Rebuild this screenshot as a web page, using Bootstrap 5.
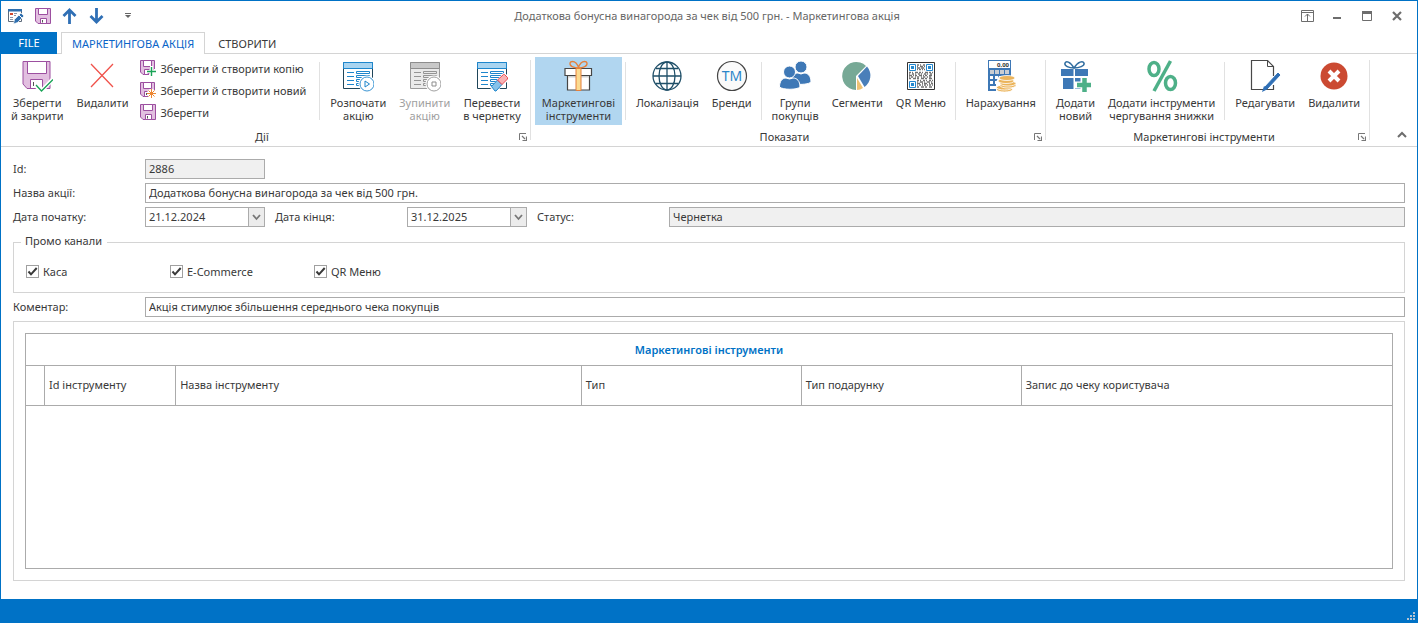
<!DOCTYPE html>
<html lang="uk">
<head>
<meta charset="utf-8">
<meta name="viewport" content="width=device-width, initial-scale=1">
<title>Маркетингова акція</title>
<link href="https://cdn.jsdelivr.net/npm/bootstrap@5.3.0/dist/css/bootstrap.min.css" rel="stylesheet">
<style>
:root{--accent:#0072c6;--line:#d4d4d4;--edge:#ababab;--ink:#393939}
body{font-family:"Noto Sans","Open Sans",sans-serif;font-size:11px;line-height:13px;color:var(--ink);background:#fff}
svg{display:block;flex:none}
button{font:inherit;color:inherit}
.app-window{min-height:100vh;border:1px solid var(--accent);border-bottom:0}
.title-bar{height:31px;padding:0 5px 0 1px}
.title-side{flex:1 1 0}
.title-bar h1{font-size:11px;line-height:30px;color:#666;font-weight:400}
.bar-btn{width:27px;height:30px;border:0;padding:0;background:none;display:flex;align-items:center;justify-content:center}
.win-btn{width:30px}
.tab-strip{height:22px;border-bottom:1px solid var(--line)}
.tab-strip a{text-decoration:none;color:var(--ink);padding:4px 13px;line-height:16px;height:22px}
.tab-strip .file-tab{background:var(--accent);color:#fff;width:56px;padding:3px 0;text-align:center}
.tab-strip .current-tab{color:#0a64c8;border:1px solid var(--line);border-bottom:0;background:#fff;padding:3px 10px}
.ribbon{border-bottom:1px solid var(--line);height:93px;padding-left:4px}
.ribbon-group{padding-top:3px}
.ribbon-row{height:68px;gap:1px}
.big-btn{border:0;background:none;padding:3px 6px;display:flex;flex-direction:column;align-items:center;gap:4px;text-align:center;white-space:nowrap}
.big-btn.is-on{background:#b1d6f0;padding:3px 7px}
.big-btn:disabled{color:#a0a0a0}
.small-col{padding:0 10px 0 4px}
.small-btn{border:0;background:none;padding:0;height:22px;display:flex;align-items:center;gap:5px;white-space:nowrap}
.in-sep{width:1px;height:58px;background:#e1e1e1;margin:5px 3px 0 2px}
.group-sep{width:1px;height:80px;background:#e1e1e1;margin:6px 4px 0 3px}
.group-foot{line-height:16px;padding-top:4px}
.launcher{border:0;background:none;padding:0}
.fold-btn{padding:0 10px 8px}
main form{padding:12px 12px 18px}
.form-lines{display:grid;grid-template-columns:122px 120px 122px 120px 122px 1fr;gap:4px 10px;align-items:center}
.form-lines label{padding-bottom:1px}
.line-start{grid-column:1}
.span-rest{grid-column:2/-1}
.box-input{height:20px;border:1px solid var(--edge);border-radius:0;padding:0 3px 1px;font-size:11px;line-height:16px;color:var(--ink);background:#fff;width:100%;min-width:0;outline:0}
.box-input[readonly]{background:#f0f0f0}
.drop-btn{width:16px;flex:none;border:1px solid var(--edge);border-left:0;background:#ececec;padding:0;display:flex;align-items:center;justify-content:center}
.channel-box{border:1px solid var(--line);height:59px;padding:0 12px;margin:7px 0 4px}
.channel-box legend{float:none;width:auto;font-size:11px;line-height:14px;padding:0 5px 2px 4px;margin:0 0 0 -5px}
.channel-row{padding-top:15px}
.channel{width:144px;display:flex;align-items:center;gap:4px}
.channel input{appearance:none;width:13px;height:13px;margin:0;border:1px solid #a0a0a0;background:#fff center/11px 11px no-repeat}
.channel input:checked{background-image:url("data:image/svg+xml,%3Csvg xmlns='http://www.w3.org/2000/svg' viewBox='0 0 11 11'%3E%3Cpath d='M1.5 5.5 4 8.3 9.7 2' fill='none' stroke='%23393939' stroke-width='2'/%3E%3C/svg%3E")}
.tools-panel{border:1px solid var(--line);padding:11px;margin-top:4px}
.grid-frame{border:1px solid var(--edge)}
.tools-table{width:100%;table-layout:fixed;border-collapse:separate;border-spacing:0}
.tools-table th{font-weight:400;height:40px;padding:0 4px 2px;border-bottom:1px solid var(--edge);border-right:1px solid var(--edge)}
.tools-table th:last-child{border-right:0}
.tools-table .band-title{height:32px;padding:0;text-align:center;font-weight:600;color:var(--accent)}
.status-bar{height:24px;background:var(--accent);padding:0 2px 3px}
</style>
</head>
<body>
<svg width="0" height="0" class="position-absolute" aria-hidden="true">
<defs>
<symbol id="disk" viewBox="0 0 16 16"><path d="M.5.5h15v15H3L.5 13z" fill="#e2bfe0" stroke="#9c4fa0"/><path d="M3.500.5h9v6h-9z" fill="#fff" stroke="#9c4fa0"/><path d="M5.500 10.500h6v5h-6z" fill="#fff" stroke="#9c4fa0"/><path d="M7.500 12v2.500" stroke="#555"/></symbol>
<symbol id="disk-cut" viewBox="0 0 16 16"><path d="M9 14.500H3L.5 12V.5h14V9" fill="#e2bfe0" stroke="#9c4fa0"/><path d="M3.500.5h8v6h-8z" fill="#fff" stroke="#9c4fa0"/><path d="M9 9.500H4.500v5H8z" fill="#fff" stroke="#9c4fa0"/><path d="M6.500 11v2" stroke="#555"/></symbol>
<symbol id="sheet" viewBox="0 0 32 32"><path d="M1.500 2.500h29v26h-29z" fill="#fff" stroke="currentColor"/><path d="M1.500 2.500h29v6h-29z" style="fill:var(--head);stroke:var(--edge2)"/><path d="M5 12.500h7M5 16.500h7M5 20.500h7M5 24.500h7M14.500 11.500h13v2h-13zM14.500 15.500h13v2h-13zM14.500 19.500h7v2h-7zM14.500 23.500h4v2h-4z" fill="none" style="stroke:var(--edge2)"/></symbol>
<symbol id="corner" viewBox="0 0 8 8"><path d="M.5 7V.5H7" fill="none" stroke="#777"/><path d="M3 3l3 3M7.500 3.500v4h-4" fill="none" stroke="#777" stroke-width="1.200"/></symbol>
</defs>
</svg>

<div class="app-window d-flex flex-column">
<header class="title-bar d-flex align-items-start">
  <div class="title-side d-flex">
    <button class="bar-btn" aria-label="Акція"><svg width="16" height="16" viewBox="0 0 16 16"><path d="M.5 1.500h13v12H.5z" fill="#fff" stroke="#5d6b7b"/><path d="M0 1h14v2.500H0z" fill="#2f6fae"/><path d="M2 5h3v2H2z" fill="#d2492f"/><path d="M6 5.500h3M2 9.500h3M6 7.500h2M2 11.500h3" stroke="#8997a8"/><path d="M5.500 16l1-4.500L13 5l3 3-6.500 6.500z" fill="#2f6fae" stroke="#fff" stroke-width=".7"/><path d="M11 7l3 3" stroke="#fff"/></svg></button>
    <button class="bar-btn" aria-label="Зберегти"><svg width="16" height="16"><use href="#disk"/></svg></button>
    <button class="bar-btn" aria-label="Попередній"><svg width="15" height="16" viewBox="0 0 14 16"><path d="M7 16V2M1 8l6-6 6 6" fill="none" stroke="#2f6fb5" stroke-width="2.800"/></svg></button>
    <button class="bar-btn" aria-label="Наступний"><svg width="15" height="16" viewBox="0 0 14 16"><path d="M7 0v14M1 8l6 6 6-6" fill="none" stroke="#2f6fb5" stroke-width="2.800"/></svg></button>
    <button class="bar-btn ms-1" aria-label="Налаштувати панель"><svg width="6" height="6" viewBox="0 0 6 6"><path d="M0 .5h6" stroke="#666"/><path d="M0 2h6L3 5z" fill="#666"/></svg></button>
  </div>
  <h1 class="text-center m-0">Додаткова бонусна винагорода за чек від 500 грн. - Маркетингова акція</h1>
  <div class="title-side d-flex justify-content-end">
    <button class="bar-btn win-btn" aria-label="Стрічка"><svg width="13" height="12" viewBox="0 0 13 12"><path d="M.5.5h12v11H.5zM.5 2.500h12M6.500 11V4M4 6.500l2.500-2.500L9 6.500" fill="none" stroke="#6d6d6d"/></svg></button>
    <button class="bar-btn win-btn" aria-label="Згорнути"><svg width="10" height="10" viewBox="0 0 10 10"><path d="M1 7h8" stroke="#6d6d6d" stroke-width="2"/></svg></button>
    <button class="bar-btn win-btn" aria-label="Розгорнути"><svg width="10" height="10" viewBox="0 0 10 10"><path d="M.5.5h9v9h-9z" fill="none" stroke="#6d6d6d"/><path d="M0 0h10v3H0z" fill="#6d6d6d"/></svg></button>
    <button class="bar-btn win-btn" aria-label="Закрити"><svg width="10" height="10" viewBox="0 0 10 10"><path d="M1 1l8 8M9 1 1 9" stroke="#6d6d6d" stroke-width="2.200"/></svg></button>
  </div>
</header>

<nav class="tab-strip d-flex">
  <a href="#" class="file-tab me-1">FILE</a>
  <a href="#" class="current-tab">МАРКЕТИНГОВА АКЦІЯ</a>
  <a href="#">СТВОРИТИ</a>
</nav>

<div class="ribbon d-flex">
  <section class="ribbon-group">
    <div class="ribbon-row d-flex">
      <button class="big-btn"><svg width="32" height="32" viewBox="0 0 32 32"><path d="M2 1.500h27v27H6L2 24z" fill="#e2bfe0" stroke="#9c4fa0"/><path d="M6.500 1.500h19v12h-19z" fill="#fff" stroke="#9c4fa0"/><path d="M9.500 19.500h12v9h-12z" fill="#fff" stroke="#9c4fa0"/><path d="M12.500 22v4" stroke="#555"/><path d="M14 25l6.500 6L32 19" fill="none" stroke="#fff" stroke-width="4"/><path d="M15 25l5.500 6L32 19.500" fill="none" stroke="#19a356" stroke-width="1.300"/></svg>Зберегти<br>й закрити</button>
      <button class="big-btn"><svg width="32" height="32" viewBox="0 0 32 32"><path d="M5 4l22 23M27 4 5 27" stroke="#f0524b" stroke-width="1.300"/></svg>Видалити</button>
      <div class="small-col d-flex flex-column">
        <button class="small-btn"><svg width="16" height="16" viewBox="0 0 16 16"><use href="#disk-cut"/><path d="M6 11.500h10M11.500 6v10" stroke="#fff" stroke-width="3"/><path d="M7 11.500h9M11.500 7v9" stroke="#19a356" stroke-width="1.400"/></svg>Зберегти й створити копію</button>
        <button class="small-btn"><svg width="16" height="16" viewBox="0 0 16 16"><use href="#disk-cut"/><circle cx="11.500" cy="11.500" r="4.500" fill="#fff"/><path d="M7 11.500h9M11.500 7v9M8.500 8.500l6 6M14.500 8.500l-6 6" stroke="#ed8733"/></svg>Зберегти й створити новий</button>
        <button class="small-btn"><svg width="16" height="16"><use href="#disk"/></svg>Зберегти</button>
      </div>
      <div class="in-sep"></div>
      <button class="big-btn"><svg width="32" height="32" viewBox="0 0 32 32" style="--head:#a9d4f0;--edge2:#1e86cc;color:#1f4559"><use href="#sheet"/><circle cx="25" cy="24" r="8.500" fill="#fff"/><circle cx="25" cy="24" r="7" fill="#fff" stroke="#3b95d3"/><path d="M23 21v6l4.500-3z" fill="none" stroke="#1e86cc"/></svg>Розпочати<br>акцію</button>
      <button class="big-btn" disabled><svg width="32" height="32" viewBox="0 0 32 32" style="--head:#c8c8c8;--edge2:#8d8d8d;color:#9a9a9a"><use href="#sheet"/><path d="M2 9h28v19H2z" fill="#aaa" opacity=".25"/><circle cx="25" cy="24" r="8.500" fill="#fff"/><circle cx="25" cy="24" r="7" fill="#fff" stroke="#a0a0a0"/><path d="M23 22h4v4h-4z" fill="none" stroke="#8d8d8d"/></svg>Зупинити<br>акцію</button>
      <button class="big-btn"><svg width="32" height="32" viewBox="0 0 32 32" style="--head:#a9d4f0;--edge2:#1e86cc;color:#1f4559"><use href="#sheet"/><path d="M14 28 27 13l5 2v6L20 32z" fill="#fff"/><path d="M15.500 26.500l6-6.500 4.500 4.500-6 6.500h-1z" fill="#86c2ea" stroke="#1e86cc"/><path d="M21.500 20l6-5.500h1l3 3v1.500L26 24.500z" fill="#f7b3b5" stroke="#ea4a4e"/></svg>Перевести<br>в чернетку</button>
    </div>
    <div class="group-foot d-flex align-items-center"><span class="flex-grow-1 text-center">Дії</span><button class="launcher" aria-label="Параметри дій"><svg width="8" height="8"><use href="#corner"/></svg></button></div>
  </section>
  <div class="group-sep"></div>
  <section class="ribbon-group">
    <div class="ribbon-row d-flex">
      <button class="big-btn is-on" aria-pressed="true"><svg width="32" height="32" viewBox="0 0 32 32"><path d="M5.500 13v17h22V13z" fill="#fff" stroke="#464646" stroke-width="1.200"/><path d="M6 15h21v2.500H6z" fill="#d0d0d0"/><path d="M3 8.500h26.500v7H3z" fill="#fff" stroke="#464646" stroke-width="1.200"/><path d="M14 8.500h5v22h-5z" fill="#fbdb90" stroke="#e5803c"/><path d="M16.500 8C11.500 8 7.500 6 8 3c.5-2 4-2 6 0 1.500 1.500 2.200 3.500 2.500 5 .3-1.500 1-3.500 2.500-5 2-2 5.500-2 6 0 .5 3-3.500 5-8.500 5z" fill="none" stroke="#e5803c" stroke-width="1.300"/></svg>Маркетингові<br>інструменти</button>
      <div class="in-sep"></div>
      <button class="big-btn"><svg width="32" height="32" viewBox="0 0 32 32"><g fill="none" stroke="#1f4f68" stroke-width="1.300"><circle cx="16" cy="16" r="14"/><ellipse cx="16" cy="16" rx="8" ry="14"/><path d="M16 2v28M2 16h28M5 8.500h22M5 23.500h22"/></g></svg>Локалізація</button>
      <button class="big-btn"><svg width="32" height="32" viewBox="0 0 32 32"><circle cx="16" cy="16" r="14.500" fill="#fafafa" stroke="#454545" stroke-width="1.200"/><text x="16" y="21" text-anchor="middle" font-size="14" fill="#2a85c9">TM</text></svg>Бренди</button>
      <div class="in-sep"></div>
      <button class="big-btn"><svg width="32" height="32" viewBox="0 0 32 32"><g fill="#3e78b6" stroke="#fff"><circle cx="22" cy="7" r="6"/><path d="M12 24c0-9 4-11 7-11q3 2 6 0c4 0 7 3 7 9-2 2-8 3-20 2z"/><circle cx="10.500" cy="12" r="6"/><path d="M.5 27c0-6 3-9 6.500-9q3.500 2 7 0c4 0 7 3 7 9-3 3-17 3-20.500 0z"/></g></svg>Групи<br>покупців</button>
      <button class="big-btn"><svg width="32" height="32" viewBox="0 0 32 32"><path d="M15 16v14A14 14 0 1 1 25 6z" fill="#77a996"/><path d="M17 16 26 6.500a14 14 0 0 1-2.500 20.500z" fill="#4a7fb9"/><path d="M16 18l6 10a13 13 0 0 1-6 2z" fill="#eec274"/></svg>Сегменти</button>
      <button class="big-btn"><svg width="32" height="32" viewBox="0 0 32 32"><path d="M2.500 2.500h27v27h-27z" fill="#fff" stroke="#333"/><g fill="none" stroke="#737373" stroke-width="1.500"><path d="M12 5h8" stroke-dasharray="2 1 1 2"/><path d="M12 6.500h8" stroke-dasharray="1 2 3 1"/><path d="M12 8h8" stroke-dasharray="3 1"/><path d="M12 9.500h8" stroke-dasharray="1 1 2 1"/><path d="M4 12.500h24" stroke-dasharray="2 1 1 2 3 1"/><path d="M4 14h24" stroke-dasharray="1 2 2 1"/><path d="M4 15.500h24" stroke-dasharray="3 1 1 1 2 2"/><path d="M4 17h24" stroke-dasharray="1 1 2 2"/><path d="M4 18.500h24" stroke-dasharray="2 2 3 1"/><path d="M12 20.500h16" stroke-dasharray="2 1 1 2"/><path d="M12 22h16" stroke-dasharray="1 2 3 1"/><path d="M12 23.500h16" stroke-dasharray="3 2 1 1"/><path d="M12 25h16" stroke-dasharray="1 1 2 1"/><path d="M12 27h16" stroke-dasharray="2 2 3 1"/></g><g fill="#fff" stroke="#2489cf"><path d="M4.500 4.500h6v6h-6zM21.500 4.500h6v6h-6zM4.500 21.500h6v6h-6z"/></g><path d="M6 6h3v3H6zM23 6h3v3h-3zM6 23h3v3H6z" fill="#2489cf"/></svg>QR Меню</button>
      <div class="in-sep"></div>
      <button class="big-btn"><svg width="32" height="32" viewBox="0 0 32 32"><path d="M3 0h23v31H3z" fill="#3e78b6"/><path d="M4 1h21v7H4z" fill="#fff"/><text x="24" y="7" text-anchor="end" font-size="6" font-weight="700" fill="#333">0,00</text><path d="M5 10h4v4H5zM10 10h4v4h-4zM15 10h4v4h-4zM20 10h4v4h-4z" fill="#c9cdd2"/><path d="M5 16h3v3H5zM10 16h3v3h-3zM15 16h4v3h-4zM5 21h3v3H5zM10 21h3v3h-3zM5 26h6v3H5z" fill="#fff"/><path d="M11 31V22l3-6h12l5 8-2 7z" fill="#fff"/><g fill="#ebb45b" stroke="#fff" stroke-width=".8"><ellipse cx="19.500" cy="29.500" rx="8" ry="2.500"/><ellipse cx="19.500" cy="27.500" rx="8" ry="2.500"/><ellipse cx="23" cy="25.500" rx="8" ry="2.500"/><ellipse cx="23" cy="23.500" rx="8" ry="2.500"/><ellipse cx="21" cy="21" rx="8" ry="2.500"/><ellipse cx="22" cy="18" rx="8" ry="2.500"/></g></svg>Нарахування</button>
    </div>
    <div class="group-foot d-flex align-items-center"><span class="flex-grow-1 text-center">Показати</span><button class="launcher" aria-label="Параметри показу"><svg width="8" height="8"><use href="#corner"/></svg></button></div>
  </section>
  <div class="group-sep"></div>
  <section class="ribbon-group">
    <div class="ribbon-row d-flex">
      <button class="big-btn"><svg width="32" height="32" viewBox="0 0 32 32"><g fill="#3e78b6"><path d="M1 9h12.500v7H1zM15 9h13v7H15zM3 18h10.500v11H3zM15 18h11v11H15z"/></g><path d="M14 8C9 8 4 6 5 3c1-2 5-2 9 5 4-7 9-7 10-5 1 3-5 5-10 5z" fill="none" stroke="#2f6c9f" stroke-width="1.500"/><path d="M24 16v16M15 25h17" stroke="#fff" stroke-width="7"/><path d="M24.500 18v14M17 25h14" stroke="#4eb088" stroke-width="4.500"/></svg>Додати<br>новий</button>
      <button class="big-btn"><svg width="32" height="32" viewBox="0 0 32 32"><g fill="none" stroke="#4eb088" stroke-width="3.500"><ellipse cx="8" cy="9" rx="5" ry="6.500"/><ellipse cx="24.500" cy="23" rx="5" ry="6.500"/><path d="M24.500 1 8 31"/></g></svg>Додати інструменти<br>чергування знижки</button>
      <div class="in-sep"></div>
      <button class="big-btn"><svg width="32" height="32" viewBox="0 0 32 32"><path d="M24.500 16V6.500L18.500.5h-16v29h22V25" fill="none" stroke="#484848" stroke-width="1.200"/><path d="M18.500.5v6h6" fill="none" stroke="#484848"/><path d="M16 27 29 13l2 2-13 14z" fill="#2f6fb5" stroke="#2f6fb5"/><path d="M13 32l2-6 4 3z" fill="#2f6fb5"/></svg>Редагувати</button>
      <button class="big-btn"><svg width="32" height="32" viewBox="0 0 32 32"><circle cx="16" cy="16" r="13.500" fill="#cb4a32"/><path d="M11 11l10 10M21 11 11 21" stroke="#fff" stroke-width="4"/></svg>Видалити</button>
    </div>
    <div class="group-foot d-flex align-items-center"><span class="flex-grow-1 text-center">Маркетингові інструменти</span><button class="launcher" aria-label="Параметри інструментів"><svg width="8" height="8"><use href="#corner"/></svg></button></div>
  </section>
  <div class="group-sep"></div>
  <button class="launcher fold-btn ms-auto align-self-end" aria-label="Згорнути стрічку"><svg width="10" height="7" viewBox="0 0 10 7"><path d="M1 6l4-4 4 4" fill="none" stroke="#6d6d6d" stroke-width="2"/></svg></button>
</div>

<main class="flex-grow-1 d-flex flex-column">
<form class="flex-grow-1 d-flex flex-column">
  <div class="form-lines">
    <label for="promo-id">Id:</label><input id="promo-id" class="box-input" value="2886" readonly>
    <label for="promo-name" class="line-start">Назва акції:</label><input id="promo-name" class="box-input span-rest" value="Додаткова бонусна винагорода за чек від 500 грн.">
    <label for="date-from">Дата початку:</label>
    <div class="d-flex"><input id="date-from" class="box-input" value="21.12.2024"><button type="button" class="drop-btn" aria-label="Обрати дату початку"><svg width="9" height="7" viewBox="0 0 9 7"><path d="M1 1l3.500 4L8 1" fill="none" stroke="#777" stroke-width="1.800"/></svg></button></div>
    <label for="date-to">Дата кінця:</label>
    <div class="d-flex"><input id="date-to" class="box-input" value="31.12.2025"><button type="button" class="drop-btn" aria-label="Обрати дату кінця"><svg width="9" height="7" viewBox="0 0 9 7"><path d="M1 1l3.500 4L8 1" fill="none" stroke="#777" stroke-width="1.800"/></svg></button></div>
    <label for="promo-state">Статус:</label><input id="promo-state" class="box-input" value="Чернетка" readonly>
  </div>
  <fieldset class="channel-box">
    <legend>Промо канали</legend>
    <div class="d-flex channel-row">
      <label class="channel"><input type="checkbox" checked>Каса</label>
      <label class="channel"><input type="checkbox" checked>E-Commerce</label>
      <label class="channel"><input type="checkbox" checked>QR Меню</label>
    </div>
  </fieldset>
  <div class="form-lines">
    <label for="promo-note">Коментар:</label><input id="promo-note" class="box-input span-rest" value="Акція стимулює збільшення середнього чека покупців">
  </div>
  <section class="tools-panel flex-grow-1 d-flex flex-column">
    <div class="grid-frame flex-grow-1">
      <table class="tools-table">
        <colgroup><col style="width:19px"><col style="width:9.6%"><col style="width:29.7%"><col style="width:16.1%"><col style="width:16.1%"><col></colgroup>
        <thead>
          <tr><th colspan="6" class="band-title">Маркетингові інструменти</th></tr>
          <tr><th></th><th>Id інструменту</th><th>Назва інструменту</th><th>Тип</th><th>Тип подарунку</th><th>Запис до чеку користувача</th></tr>
        </thead>
      </table>
    </div>
  </section>
</form>
</main>

<footer class="status-bar d-flex align-items-end justify-content-end"><svg width="8" height="8" viewBox="0 0 8 8"><path d="M6 0h2v2H6zM3 3h2v2H3zM6 3h2v2H6zM0 6h2v2H0zM3 6h2v2H3zM6 6h2v2H6z" fill="#b5c4d2"/></svg></footer>
</div>
<script src="https://cdn.jsdelivr.net/npm/bootstrap@5.3.0/dist/js/bootstrap.bundle.min.js"></script>
</body>
</html>
